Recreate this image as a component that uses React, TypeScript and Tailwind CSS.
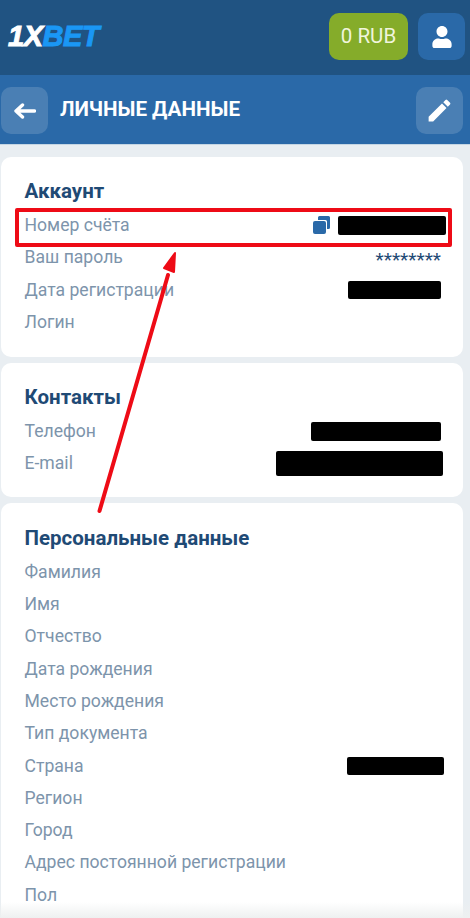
import { FaUser } from "react-icons/fa";
import { MdEdit } from "react-icons/md";

type Row = { label: string; value?: React.ReactNode };

const Blackout = ({ className }: { className: string }) => (
  <div className={"bg-black rounded-[2px] " + className} />
);

const Card = ({ title, rows, spacing, bottom }: { title: string; rows: Row[]; spacing: string; bottom: string }) => (
  <section className={"bg-white rounded-[10px] ml-[1px] w-[462px] " + spacing}>
    <h2 className="h-6 pl-[23.5px] text-[20.5px] leading-6 font-bold text-[#1f4a75]">{title}</h2>
    <div className={bottom}>
      {rows.map((row) => (
        <div key={row.label} className="h-[32.3px] flex items-center justify-between pl-[23.5px] pr-[22px]">
          <span className="text-[17.6px] text-[#7d94ab]">{row.label}</span>
          {row.value}
        </div>
      ))}
    </div>
  </section>
);

export default function App() {
  return (
    <div className="relative w-[470px] h-[918px] overflow-hidden bg-[#e9eef2] font-['Roboto',sans-serif]">
      <header className="h-[75px] bg-[#205382] flex items-center justify-between pl-2 pr-[5px] pb-[2px]">
        <div className="italic font-black text-[29px] tracking-[-0.5px] leading-none font-['Liberation_Sans',sans-serif] [-webkit-text-stroke:1px_currentColor]">
          <span className="text-white">1X</span>
          <span className="text-[#1a97f5]">BET</span>
        </div>
        <div className="flex gap-[10px]">
          <div className="w-[79px] h-[47px] rounded-[10px] bg-[#85ac2a] text-[#f0f5dc] text-[20.5px] flex items-center justify-center">
            0 RUB
          </div>
          <div className="w-[47px] h-[47px] rounded-[10px] bg-[#2a69a8] flex items-center justify-center text-white">
            <FaUser size={22} />
          </div>
        </div>
      </header>

      <div className="h-[70px] bg-[#2a69a8] flex items-center pl-[1px] pr-[7px] pt-[2px] border-b border-[#c5d6e4]">
        <div className="w-[47px] h-[47px] rounded-[10px] bg-[#4a7fb4] flex items-center justify-center text-white">
          <svg width="22" height="16" viewBox="0 0 22 16" fill="none" stroke="currentColor" strokeWidth="3.4" strokeLinecap="round" strokeLinejoin="round">
            <path d="M2 8H20.5M8.5 2L2 8L8.5 14" />
          </svg>
        </div>
        <h1 className="ml-3 mb-[2px] text-white font-bold text-[20.6px] flex-1">ЛИЧНЫЕ ДАННЫЕ</h1>
        <div className="w-[47px] h-[47px] rounded-[10px] bg-[#4a7fb4] flex items-center justify-center text-white">
          <MdEdit size={29} />
        </div>
      </div>

      <div className="pt-[12px] flex flex-col gap-[6px]">
        <Card
          title="Аккаунт"
          spacing="pt-[22px]"
          bottom="mt-[6px] mb-[19px]"
          rows={[
            {
              label: "Номер счёта",
              value: (
                <div className="flex items-center gap-[8px] -mr-[5px]">
                  <svg width="17" height="18" viewBox="0 0 17 18" fill="#2a69a8">
                    <path d="M5 1.5a1.5 1.5 0 0 1 1.5-1.5h9A1.5 1.5 0 0 1 17 1.5v10a1.5 1.5 0 0 1-1.5 1.5H14V5.5A1.5 1.5 0 0 0 12.5 4H5Z" />
                    <rect x="0" y="5" width="13" height="13" rx="2" />
                  </svg>
                  <Blackout className="w-[108px] h-[19px]" />
                </div>
              ),
            },
            { label: "Ваш пароль", value: <span className="text-[19px] leading-none text-[#1f4a75] mt-[4px]">********</span> },
            { label: "Дата регистрации", value: <Blackout className="w-[93px] h-[18px]" /> },
            { label: "Логин" },
          ]}
        />
        <Card
          title="Контакты"
          spacing="pt-[22px]"
          bottom="mt-[6px] mb-[17px]"
          rows={[
            { label: "Телефон", value: <Blackout className="w-[130px] h-[19px]" /> },
            { label: "E-mail", value: <Blackout className="w-[167px] h-[25px] -mr-[2px]" /> },
          ]}
        />
        <Card
          title="Персональные данные"
          spacing="pt-[23px]"
          bottom="mt-[6px] mb-6"
          rows={[
            { label: "Фамилия" },
            { label: "Имя" },
            { label: "Отчество" },
            { label: "Дата рождения" },
            { label: "Место рождения" },
            { label: "Тип документа" },
            { label: "Страна", value: <Blackout className="w-[97px] h-[18px] -mr-[3px]" /> },
            { label: "Регион" },
            { label: "Город" },
            { label: "Адрес постоянной регистрации" },
            { label: "Пол" },
          ]}
        />
      </div>

      {/* red annotation over the screenshot */}
      <div className="absolute left-[15px] top-[208px] w-[437px] h-[38.5px] border-[4px] border-[#ee0b16] rounded-[2px]" />
      <svg className="absolute inset-0" width="470" height="918" viewBox="0 0 470 918" fill="none">
        <path d="M99.5 511L168 275" stroke="#ee0b16" strokeWidth="4" strokeLinecap="round" />
        <path d="M175 253L164 268L174 272Z" fill="#ee0b16" stroke="#ee0b16" strokeWidth="2" strokeLinejoin="round" />
      </svg>

      <div className="absolute left-0 right-0 bottom-0 h-[16px] bg-gradient-to-b from-transparent to-[#eef0f0]" />
    </div>
  );
}
